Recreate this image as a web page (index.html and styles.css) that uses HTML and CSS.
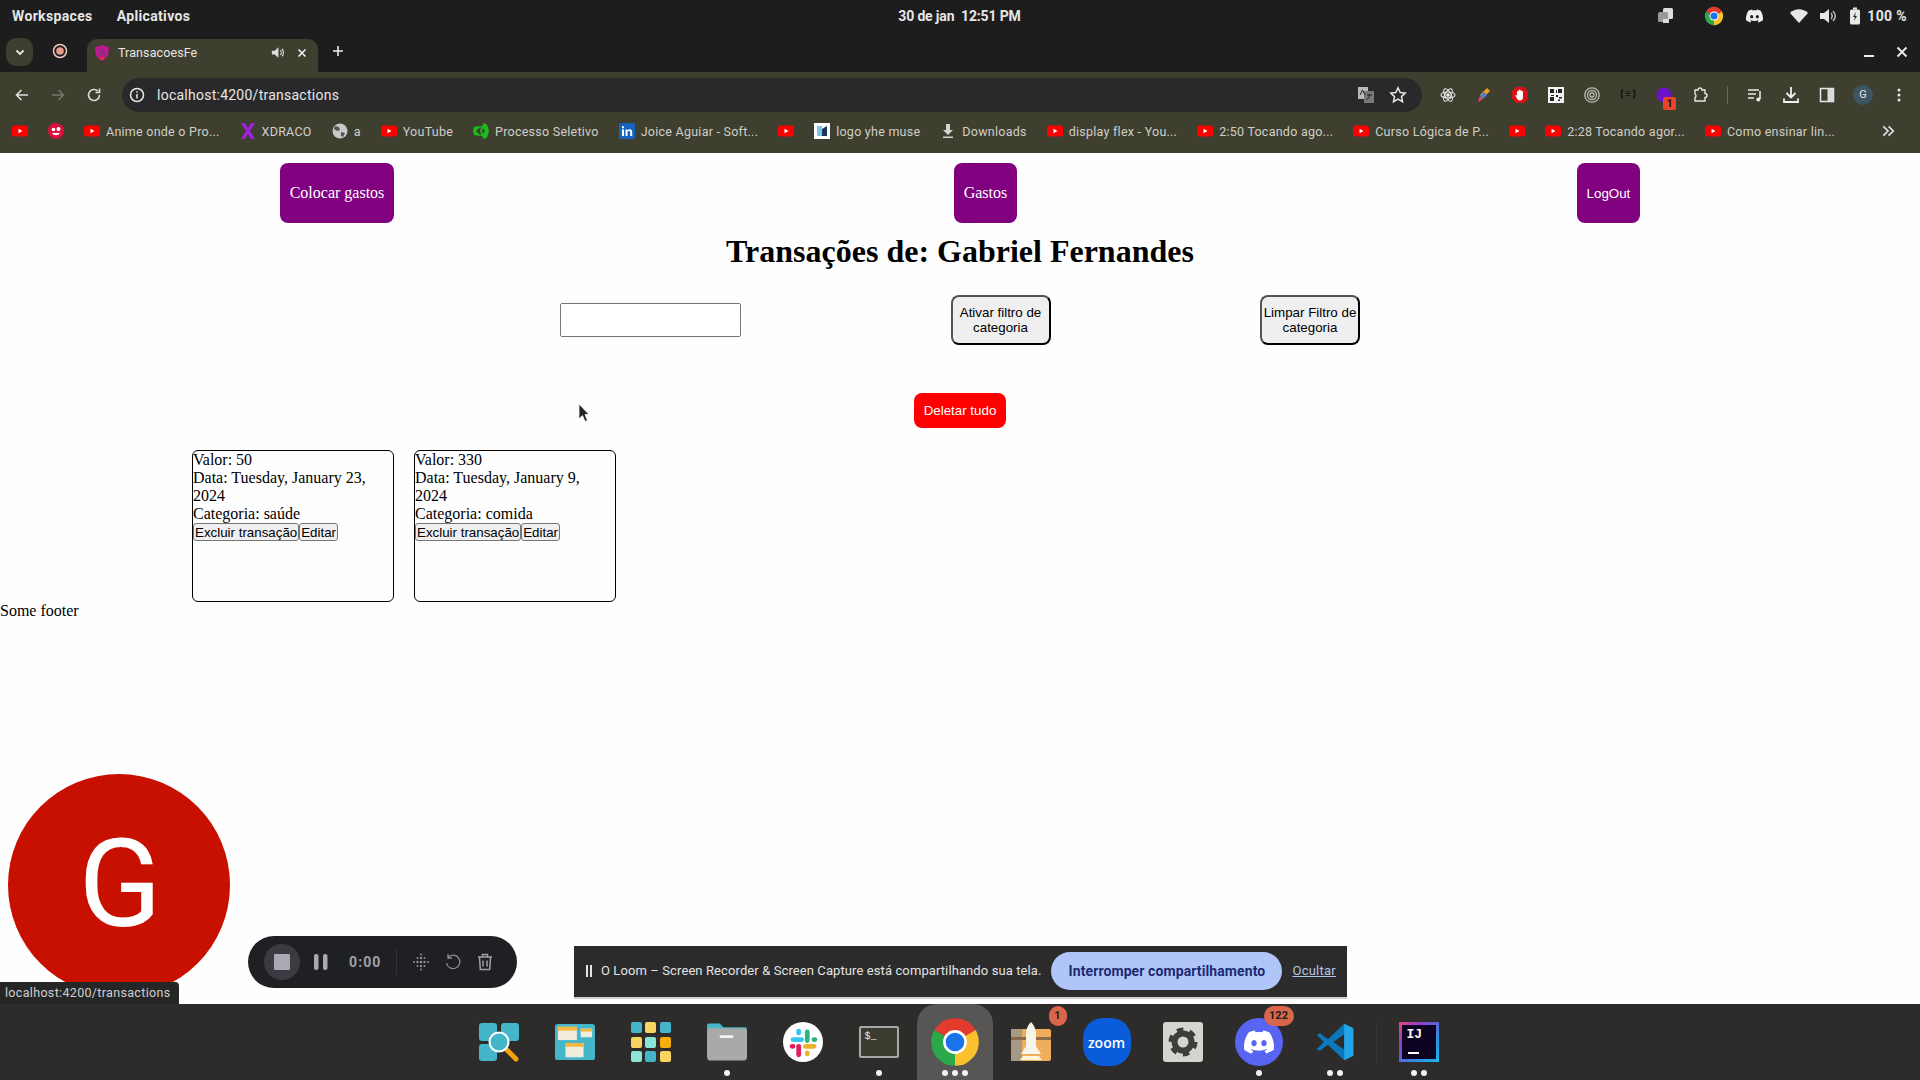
FILE: index.html
```html
<!DOCTYPE html>
<html lang="pt-BR">
<head>
<meta charset="utf-8">
<title>TransacoesFe</title>
<link rel="stylesheet" href="styles.css">
</head>
<body>
<svg class="defs" aria-hidden="true">
  <symbol id="yt" viewBox="0 0 16 16"><rect x="0" y="2.5" width="16" height="11" rx="2.5" fill="#f00"/><path d="M6.5 5.7v4.6L10.5 8z" fill="#fff"/></symbol>
  <symbol id="chrome" viewBox="0 0 48 48"><path d="M24 24L4.95 13A22 22 0 0 1 43.05 13Z" fill="#e33b2e"/><path d="M24 24L43.05 13A22 22 0 0 1 24 46Z" fill="#fbc02d"/><path d="M24 24L24 46A22 22 0 0 1 4.95 13Z" fill="#2aa84a"/><circle cx="24" cy="24" r="11" fill="#fff"/><circle cx="24" cy="24" r="8.6" fill="#1a73e8"/></symbol>
  <symbol id="discord" viewBox="0 0 24 24"><path d="M20.317 4.3698a19.7913 19.7913 0 00-4.8851-1.5152.0741.0741 0 00-.0785.0371c-.211.3753-.4447.8648-.6083 1.2495-1.8447-.2762-3.68-.2762-5.4868 0-.1636-.3933-.4058-.8742-.6177-1.2495a.077.077 0 00-.0785-.037 19.7363 19.7363 0 00-4.8852 1.515.0699.0699 0 00-.0321.0277C.5334 9.0458-.319 13.5799.0992 18.0578a.0824.0824 0 00.0312.0561c2.0528 1.5076 4.0413 2.4228 5.9929 3.0294a.0777.0777 0 00.0842-.0276c.4616-.6304.8731-1.2952 1.226-1.9942a.076.076 0 00-.0416-.1057c-.6528-.2476-1.2743-.5495-1.8722-.8923a.077.077 0 01-.0076-.1277c.1258-.0943.2517-.1923.3718-.2914a.0743.0743 0 01.0776-.0105c3.9278 1.7933 8.18 1.7933 12.0614 0a.0739.0739 0 01.0785.0095c.1202.099.246.1981.3728.2924a.077.077 0 01-.0066.1276 12.2986 12.2986 0 01-1.873.8914.0766.0766 0 00-.0407.1067c.3604.698.7719 1.3628 1.225 1.9932a.076.076 0 00.0842.0286c1.961-.6067 3.9495-1.5219 6.0023-3.0294a.077.077 0 00.0313-.0552c.5004-5.177-.8382-9.6739-3.5485-13.6604a.061.061 0 00-.0312-.0286zM8.02 15.3312c-1.1825 0-2.1569-1.0857-2.1569-2.419 0-1.3332.9555-2.4189 2.157-2.4189 1.2108 0 2.1757 1.0952 2.1568 2.419 0 1.3332-.9555 2.4189-2.1569 2.4189zm7.9748 0c-1.1825 0-2.1569-1.0857-2.1569-2.419 0-1.3332.9554-2.4189 2.1569-2.4189 1.2108 0 2.1757 1.0952 2.1568 2.419 0 1.3332-.946 2.4189-2.1568 2.4189Z"/></symbol>
</svg>

<div class="screen">
  <header class="panel">
    <div class="panel-left"><span>Workspaces</span><span>Aplicativos</span></div>
    <div class="panel-clock">30 de jan&nbsp;&nbsp;12:51 PM</div>
    <div class="panel-tray">
      <svg class="ico tray-first" viewBox="0 0 20 20"><rect x="8" y="2" width="10" height="11" rx="1.5" fill="#ddd"/><rect x="3" y="6" width="10" height="10" rx="1.5" fill="#999"/><rect x="8" y="13" width="6" height="4" fill="#ddd"/></svg>
      <svg class="ico" viewBox="0 0 20 20"><use href="#chrome"/></svg>
      <svg class="ico tray-app" viewBox="0 0 24 24" fill="#eee"><use href="#discord"/></svg>
      <svg class="ico tray-wifi" viewBox="0 0 20 20"><path d="M1 7c5-5 13-5 18 0l-9 10z" fill="#e8e8e8"/></svg>
      <svg class="ico tray-sm" viewBox="0 0 20 20"><path d="M3 7h4l5-4v14l-5-4H3z" fill="#e8e8e8"/><path d="M14 7c1.500 1.500 1.500 4.500 0 6M16 5c3 3 3 7 0 10" stroke="#bbb" stroke-width="1.500" fill="none"/></svg>
      <svg class="ico tray-bat" viewBox="0 0 20 20"><rect x="5" y="3.500" width="10" height="15" rx="1.500" fill="#e8e8e8"/><rect x="8" y="1.500" width="4" height="2" fill="#e8e8e8"/><path d="M11 6l-3 5h2l-1 4 3-5h-2z" fill="#222"/></svg>
      <span class="tray-pct">100 %</span>
    </div>
  </header>

  <div class="tabstrip">
    <button class="tab-menu" type="button"><svg viewBox="0 0 12 12" class="i12"><path d="M2.500 4.500L6 8l3.500-3.500" fill="none" stroke="#e8e8e8" stroke-width="1.800"/></svg></button>
    <svg class="rec" viewBox="0 0 16 16"><circle cx="8" cy="8" r="6.500" fill="none" stroke="#f2c6c0" stroke-width="1.500"/><circle cx="8" cy="8" r="3.800" fill="#e79d8e"/></svg>
    <div class="tab">
      <svg class="fav" viewBox="0 0 16 16"><path d="M8 0L1 2.500 2 11l6 5 6-5 1-8.500z" fill="#c2188f"/><path d="M8 3L4 12h1.800L8 7l2.200 5H12z" fill="#6d3b70"/><path d="M5 12h6l-1 3H6z" fill="#e8214f"/></svg>
      <span class="tab-title">TransacoesFe</span>
      <svg class="tab-sound" viewBox="0 0 16 16"><path d="M2 6h3l4-3.500v11L5 10H2z" fill="#ddd"/><path d="M11 5.500c1.300 1.300 1.300 3.700 0 5M12.800 4c2 2.200 2 5.800 0 8" stroke="#ddd" stroke-width="1.200" fill="none"/></svg>
      <svg class="tab-x" viewBox="0 0 12 12"><path d="M2.500 2.500l7 7m0-7l-7 7" stroke="#eee" stroke-width="1.600"/></svg>
    </div>
    <svg class="tab-plus" viewBox="0 0 12 12"><path d="M6 1v10M1 6h10" stroke="#eee" stroke-width="1.600"/></svg>
    <div class="win-ctrl">
      <svg class="i12" viewBox="0 0 12 12"><path d="M1 10h10" stroke="#eee" stroke-width="2"/></svg>
      <svg class="i12" viewBox="0 0 12 12"><path d="M1.500 1.500l9 9m0-9l-9 9" stroke="#eee" stroke-width="1.800"/></svg>
    </div>
  </div>

  <div class="toolbar">
    <div class="tool-group">
      <span class="tool"><svg class="i16" viewBox="0 0 16 16"><path d="M14 8H3M7.500 3L2.500 8l5 5" fill="none" stroke="#ddd" stroke-width="1.600"/></svg></span>
      <span class="tool"><svg class="i16" viewBox="0 0 16 16"><path d="M2 8h11M8.500 3l5 5-5 5" fill="none" stroke="#77776a" stroke-width="1.600"/></svg></span>
      <span class="tool"><svg class="i16" viewBox="0 0 16 16"><path d="M13.500 8a5.500 5.500 0 1 1-1.700-4M13.500 1.500V5.500H9.500" fill="none" stroke="#ddd" stroke-width="1.600"/></svg></span>
    </div>
    <div class="omnibox">
      <svg class="i16 omni-info" viewBox="0 0 16 16"><circle cx="8" cy="8" r="6.500" fill="none" stroke="#e8e8e8" stroke-width="1.500"/><path d="M8 7v4.500M8 4.300v1.500" stroke="#e8e8e8" stroke-width="1.500"/></svg>
      <span class="omni-url">localhost:4200/transactions</span>
      <svg class="i18 omni-tr" viewBox="0 0 18 18"><rect x="1" y="1" width="10" height="12" fill="#b9b9b9"/><rect x="7" y="5" width="10" height="12" fill="#777"/><path d="M3 9l2.500-5L8 9M10 9h5M12.500 8v1c0 2-1.500 4-3 5" stroke="#222" stroke-width="1" fill="none"/></svg>
      <svg class="i18 omni-star" viewBox="0 0 18 18"><path d="M9 1.800l2.200 4.700 5 .6-3.700 3.500 1 5.100L9 13.200l-4.500 2.500 1-5.100L1.800 7.100l5-.6z" fill="none" stroke="#e8e8e8" stroke-width="1.500"/></svg>
    </div>
    <div class="tool-group ext-group">
      <span class="tool"><svg class="i16" viewBox="0 0 16 16" fill="none" stroke="#e6e6e6" stroke-width="1.100"><ellipse cx="8" cy="8" rx="7" ry="3"/><ellipse cx="8" cy="8" rx="7" ry="3" transform="rotate(60 8 8)"/><ellipse cx="8" cy="8" rx="7" ry="3" transform="rotate(120 8 8)"/><circle cx="8" cy="8" r="1.300" fill="#e6e6e6"/></svg></span>
      <span class="tool"><svg class="i16" viewBox="0 0 16 16"><path d="M11 1l3 3-7 7-3-3z" fill="#f39c23"/><path d="M8 5l3 3-4 4-3-3z" fill="#4a7fd9"/><path d="M4 9l3 3-5 3z" fill="#e5484d"/></svg></span>
      <span class="tool"><svg class="i18" viewBox="0 0 18 18"><path d="M5.300 1h7.400L17 5.300v7.400L12.700 17H5.300L1 12.700V5.300z" fill="#e00f14"/><circle cx="9" cy="9" r="6.800" fill="#d91014"/><path d="M6 9V5.500a.8.800 0 0 1 1.500 0V4a.8.800 0 0 1 1.500 0v.500a.8.800 0 0 1 1.500 0V5.500a.8.800 0 0 1 1.500 0V11c0 2-1 3.500-3 3.500-1.800 0-2.500-1-3-2l-1.500-2.500c-.4-.8.6-1.400 1.200-.7z" fill="#fff"/></svg></span>
      <span class="tool"><svg class="i16" viewBox="0 0 16 16"><rect width="16" height="16" fill="#f2f2f2"/><path d="M2 2h4v4H2zM10 2h4v4h-4zM2 10h4v4H2zM8 8h2v2H8zM11 10h3v1.500h-3zM10 12.500h2V14h-2zM8 3h1v3H8zM3 8h3v1H3z" fill="#222"/></svg></span>
      <span class="tool"><svg class="i16" viewBox="0 0 16 16" fill="none" stroke="#bdbdb3"><circle cx="8" cy="8" r="7.200" stroke-width="1.300"/><circle cx="8" cy="8" r="4.500" stroke-width="1.300"/><circle cx="8" cy="8" r="2" stroke-width="1.300"/></svg></span>
      <span class="tool"><span class="ext-code">(≡)</span></span>
      <span class="tool ext-badged"><svg class="i16" viewBox="0 0 16 16"><circle cx="8" cy="8" r="7.500" fill="#6a12c9"/></svg><span class="ext-badge">1</span></span>
      <span class="tool"><svg class="i16" viewBox="0 0 16 16"><path d="M3 3h3a2 2 0 0 1 4 0h3v3.500a2 2 0 0 1 0 4V14H3v-3.500a2 2 0 0 0 0-3.500z" fill="none" stroke="#e8e8e8" stroke-width="1.400"/></svg></span>
      <span class="tool-sep"></span>
      <span class="tool"><svg class="i16" viewBox="0 0 16 16"><path d="M1 3h11M1 7h8M1 11h6" stroke="#e8e8e8" stroke-width="1.600"/><path d="M13 4v8" stroke="#e8e8e8" stroke-width="1.600"/><circle cx="11.300" cy="12.500" r="2" fill="#e8e8e8"/></svg></span>
      <span class="tool"><svg class="i18" viewBox="0 0 18 18"><path d="M9 1v10M4.500 7L9 11.500 13.500 7M2 12.500V16h14v-3.500" fill="none" stroke="#f0f0f0" stroke-width="1.800"/></svg></span>
      <span class="tool"><svg class="i16" viewBox="0 0 16 16"><rect x="1.500" y="1.500" width="13" height="13" fill="none" stroke="#e8e8e8" stroke-width="1.500"/><rect x="8.500" y="1.500" width="6" height="13" fill="#d9d9d9"/></svg></span>
      <span class="tool"><span class="profile">G</span></span>
      <span class="tool"><svg class="i16" viewBox="0 0 16 16" fill="#e8e8e8"><circle cx="8" cy="3" r="1.500"/><circle cx="8" cy="8" r="1.500"/><circle cx="8" cy="13" r="1.500"/></svg></span>
    </div>
  </div>

  <nav class="bookmarks">
    <a class="bm"><svg class="bi"><use href="#yt"/></svg></a>
    <a class="bm"><svg class="bi" viewBox="0 0 16 16"><circle cx="8" cy="8" r="8" fill="#d8103c"/><circle cx="5.500" cy="6.500" r="1.800" fill="#fff"/><circle cx="10.500" cy="6" r="2" fill="#fff"/><path d="M4 10c2 3 6 3 8 0z" fill="#fff"/></svg></a>
    <a class="bm"><svg class="bi"><use href="#yt"/></svg><span>Anime onde o Pro...</span></a>
    <a class="bm"><svg class="bi" viewBox="0 0 16 16"><path d="M1 0h4l3 5 3-5h4l-5 8 5 8h-4l-3-5-3 5H1l5-8z" fill="#a01ee0"/></svg><span>XDRACO</span></a>
    <a class="bm"><svg class="bi" viewBox="0 0 16 16"><circle cx="8" cy="8" r="7.500" fill="#c9c9c9"/><path d="M3 3l4 1 1 3-3 1-3-2zM9 9l4 1-2 4-2-1z" fill="#56564a"/></svg><span>a</span></a>
    <a class="bm"><svg class="bi"><use href="#yt"/></svg><span>YouTube</span></a>
    <a class="bm"><svg class="bi" viewBox="0 0 16 16"><path d="M10.500 0l3.500 1.500L16 8l-2 6.500L10.500 16 9 12.800H5.500L1 12 0 8l1-4 4.500-.8H9zM6.500 4.500L3 8l3.500 3.500h2L7 8l1.500-3.500zM10 5l-1 3 1 3 2-3z" fill="#1bbd1e" fill-rule="evenodd"/></svg><span>Processo Seletivo</span></a>
    <a class="bm"><svg class="bi" viewBox="0 0 16 16"><rect width="16" height="16" rx="1.500" fill="#1565c0"/><path d="M3 6.500h2V13H3zM3 3.300h2v2H3zM6.500 6.500h2v1c.6-.8 1.300-1.200 2.300-1.200 1.700 0 2.400 1.100 2.400 3V13h-2V9.700c0-1-.3-1.600-1.200-1.600s-1.500.7-1.500 1.700V13h-2z" fill="#fff"/></svg><span>Joice Aguiar - Soft...</span></a>
    <a class="bm"><svg class="bi"><use href="#yt"/></svg></a>
    <a class="bm"><svg class="bi" viewBox="0 0 16 16"><rect width="16" height="16" fill="#fff"/><path d="M3 3h5v10H3z" fill="#7fc3e8"/><path d="M8 6l5-3v10H8z" fill="#19375c"/></svg><span>logo yhe muse</span></a>
    <a class="bm"><svg class="bi" viewBox="0 0 16 16"><path d="M6 1h4v6h3l-5 5-5-5h3zM3 13.500h10V15H3z" fill="#d2d2d2"/></svg><span>Downloads</span></a>
    <a class="bm"><svg class="bi"><use href="#yt"/></svg><span>display flex - You...</span></a>
    <a class="bm"><svg class="bi"><use href="#yt"/></svg><span>2:50 Tocando ago...</span></a>
    <a class="bm"><svg class="bi"><use href="#yt"/></svg><span>Curso Lógica de P...</span></a>
    <a class="bm"><svg class="bi"><use href="#yt"/></svg></a>
    <a class="bm"><svg class="bi"><use href="#yt"/></svg><span>2:28 Tocando agor...</span></a>
    <a class="bm"><svg class="bi"><use href="#yt"/></svg><span>Como ensinar lin...</span></a>
    <svg class="bm-more" viewBox="0 0 12 12"><path d="M2 2l4 4-4 4M6.500 2l4 4-4 4" fill="none" stroke="#ddd" stroke-width="1.500"/></svg>
  </nav>

  <main class="page">
    <div class="top-nav">
      <a class="nav-btn nav-serif">Colocar gastos</a>
      <a class="nav-btn nav-serif">Gastos</a>
      <button class="nav-btn nav-sans" type="button">LogOut</button>
    </div>
    <h1 class="title">Transações de: Gabriel Fernandes</h1>
    <div class="filters">
      <input class="filter-input" type="text" aria-label="Categoria">
      <button class="filter-btn" type="button">Ativar filtro de categoria</button>
      <button class="filter-btn" type="button">Limpar Filtro de categoria</button>
    </div>
    <div class="delete-row"><button class="delete-btn" type="button">Deletar tudo</button></div>
    <div class="cards">
      <article class="card">
        <div>Valor: 50</div>
        <div>Data: Tuesday, January 23, 2024</div>
        <div>Categoria: saúde</div>
        <div class="card-actions"><button class="mini" type="button">Excluir transação</button><button class="mini" type="button">Editar</button></div>
      </article>
      <article class="card">
        <div>Valor: 330</div>
        <div>Data: Tuesday, January 9, 2024</div>
        <div>Categoria: comida</div>
        <div class="card-actions"><button class="mini" type="button">Excluir transação</button><button class="mini" type="button">Editar</button></div>
      </article>
    </div>
    <footer class="foot">Some footer</footer>

    <svg class="cursor" viewBox="0 0 12 20"><path d="M1 1v15l3.500-3.500 2.500 6 2.500-1-2.500-6H11z" fill="#222" stroke="#fff" stroke-width=".8"/></svg>
    <div class="avatar">G</div>
    <div class="status">localhost:4200/transactions</div>

    <div class="loom">
      <span class="loom-stop"><span class="loom-square"></span></span>
      <svg class="loom-pause" viewBox="0 0 14 16"><rect x="0" y="0" width="4.500" height="16" rx="2" fill="#a9a9b0"/><rect x="9" y="0" width="4.500" height="16" rx="2" fill="#a9a9b0"/></svg>
      <span class="loom-time">0:00</span>
      <span class="loom-sep"></span>
      <svg class="loom-ico" viewBox="0 0 18 18" fill="#8d8d93"><circle cx="9" cy="1.500" r="1"/><circle cx="5.500" cy="5" r="1"/><circle cx="9" cy="5" r="1.200"/><circle cx="12.500" cy="5" r="1"/><circle cx="2" cy="9" r="1"/><circle cx="5.500" cy="9" r="1.200"/><circle cx="9" cy="9" r="1.300"/><circle cx="12.500" cy="9" r="1.200"/><circle cx="16" cy="9" r="1"/><circle cx="5.500" cy="13" r="1"/><circle cx="9" cy="13" r="1.200"/><circle cx="12.500" cy="13" r="1"/><circle cx="9" cy="16.500" r="1"/></svg>
      <svg class="loom-ico" viewBox="0 0 18 18"><path d="M4 4.500A6.700 6.700 0 1 1 2.500 10M4 1v4h4" fill="none" stroke="#8d8d93" stroke-width="1.300"/></svg>
      <svg class="loom-ico" viewBox="0 0 18 18"><path d="M2 4h14M6.500 4V1.500h5V4M3.500 4l.8 12.500h9.400L14.500 4M7 7.500v6M11 7.500v6" fill="none" stroke="#a0a0a6" stroke-width="1.500"/></svg>
    </div>

    <div class="sharebar">
      <svg class="share-pause" viewBox="0 0 8 16"><path d="M1 2h2v12H1zM5 2h2v12H5z" fill="#e4e4e4"/></svg>
      <span class="share-text">O Loom – Screen Recorder &amp; Screen Capture está compartilhando sua tela.</span>
      <button class="share-stop" type="button">Interromper compartilhamento</button>
      <a class="share-hide">Ocultar</a>
    </div>
  </main>

  <footer class="dock">
    <div class="dock-apps">
      <div class="app"><svg class="dk" viewBox="0 0 40 40"><rect x="0" y="1" width="18" height="18" rx="3" fill="#45b5c9"/><rect x="22" y="1" width="18" height="18" rx="3" fill="#45b5c9"/><rect x="0" y="22" width="18" height="17" rx="3" fill="#45b5c9"/><path d="M27 27l10 10" stroke="#f0a30a" stroke-width="5" stroke-linecap="round"/><circle cx="20" cy="20" r="9.500" fill="#43b7ca" stroke="#fff" stroke-width="2"/></svg></div>
      <div class="app"><svg class="dk" viewBox="0 0 42 40"><rect y="1" width="42" height="38" rx="3" fill="#45b5c9"/><rect x="3" y="4" width="20" height="14" fill="#f1ecdb"/><rect x="3" y="4" width="20" height="4" fill="#f3b63f"/><rect x="27" y="6" width="12" height="9" fill="#f1ecdb"/><rect x="27" y="6" width="12" height="3" fill="#f3b63f"/><rect x="11" y="21" width="19" height="15" fill="#f1ecdb"/><rect x="11" y="21" width="19" height="4" fill="#f3b63f"/></svg></div>
      <div class="app"><div class="app-grid"><i class="g-teal"></i><i class="g-yellow"></i><i class="g-teal"></i><i class="g-yellow"></i><i class="g-mint"></i><i class="g-orange"></i><i class="g-mint"></i><i class="g-teal"></i><i class="g-yellow"></i></div></div>
      <div class="app"><svg class="dk" viewBox="0 0 41 40"><path d="M0 3a2 2 0 0 1 2-2h11l4 4h22a2 2 0 0 1 2 2v8H0z" fill="#45b5c9"/><rect y="6" width="41" height="33" rx="4" fill="#a9a9a9"/><rect x="13" y="13" width="14" height="3" rx="1" fill="#f3f3f3"/></svg><i class="dots"><b></b></i></div>
      <div class="app"><svg class="dk" viewBox="0 0 42 42"><circle cx="21" cy="21" r="21" fill="#fff"/><rect x="8" y="16" width="14" height="5" rx="2.500" fill="#36c5f0"/><rect x="14" y="7" width="5" height="7" rx="2.500" fill="#36c5f0"/><rect x="23" y="8" width="5" height="14" rx="2.500" fill="#2eb67d"/><rect x="30" y="16" width="6" height="5" rx="2.500" fill="#2eb67d"/><rect x="14" y="23" width="5" height="14" rx="2.500" fill="#e01e5a"/><rect x="7" y="23" width="6" height="5" rx="2.500" fill="#e01e5a"/><rect x="21" y="23" width="14" height="5" rx="2.500" fill="#ecb22e"/><rect x="23" y="30" width="5" height="6" rx="2.500" fill="#ecb22e"/></svg></div>
      <div class="app"><div class="app-term">$_</div><i class="dots"><b></b></i></div>
      <div class="app app-active"><svg class="dk-chrome"><use href="#chrome"/></svg><i class="dots"><b></b><b></b><b></b></i></div>
      <div class="app"><svg class="dk" viewBox="0 0 40 40"><rect y="7" width="40" height="32" rx="2" fill="#f0ad5c"/><rect y="7" width="11" height="32" fill="#a69a86"/><rect y="15" width="40" height="3" fill="#8b6b4a"/><path d="M20 0c3 3 5 7 5 13v11l5 8H10l5-8V13c0-6 2-10 5-13z" fill="#f7f4ea"/><path d="M12 34h16l3 4H9z" fill="#fff6d8"/></svg><span class="badge">1</span></div>
      <div class="app"><div class="app-zoom">zoom</div></div>
      <div class="app"><svg class="dk" viewBox="0 0 40 40"><rect width="40" height="40" rx="3" fill="#d5d4cf"/><circle cx="20" cy="20" r="8.500" fill="none" stroke="#3f3d38" stroke-width="6"/><circle cx="20" cy="20" r="12.500" fill="none" stroke="#3f3d38" stroke-width="4" stroke-dasharray="6.500 6.590"/></svg></div>
      <div class="app"><span class="app-discord"><svg class="dis" viewBox="0 0 24 24" fill="#fff"><use href="#discord"/></svg></span><span class="badge badge-wide">122</span><i class="dots"><b></b></i></div>
      <div class="app"><svg class="dk" viewBox="0 0 24 24"><path d="M17.500 1L7.700 10.300 3 6.700 1 7.700 5.300 12 1 16.300 3 17.300 7.700 13.700 17.500 23 23 20.300V3.700zM17.500 7.300V16.700L11 12z" fill="#0a78bd" fill-rule="evenodd"/><path d="M17.500 1L23 3.700V20.300L17.500 23V16.700 7.300z" fill="#22a5e6"/></svg><i class="dots"><b></b><b></b></i></div>
    </div>
    <span class="dock-sep"></span>
    <div class="app">
      <div class="app-ij"><div class="ij-inner"><span>IJ</span><em></em></div></div>
      <i class="dots"><b></b><b></b></i>
    </div>
  </footer>
</div>
</body>
</html>
```

FILE: styles.css
```css
* { box-sizing: border-box; }
html, body { margin: 0; height: 100%; }
body { overflow: hidden; background: #fff; font-family: "Liberation Serif", serif; }
.defs { display: none; }
.screen { display: flex; flex-direction: column; width: 1920px; height: 1080px; }
svg { display: block; flex: none; }
.i12 { width: 12px; height: 12px; }
.i16 { width: 16px; height: 16px; }
.i18 { width: 18px; height: 18px; }

/* GNOME panel */
.panel { display: grid; grid-template-columns: 1fr auto 1fr; align-items: center; height: 32px; padding: 0 13px 0 12px; background: #1d1d1d; color: #e6e6e6; font: 700 14px Roboto, sans-serif; }
.panel-left { display: flex; gap: 24px; }
.panel-left span { letter-spacing: .35px; }
.panel-clock { font-size: 14px; font-weight: 700; letter-spacing: -.15px; white-space: pre; }
.panel-tray { display: flex; align-items: center; justify-content: flex-end; gap: 20px; }
.ico { width: 20px; height: 20px; }
.tray-first { margin-right: 9px; }
.tray-app { width: 17px; margin: 0 1.500px; }
.tray-wifi { margin-left: 5px; margin-right: -12px; }
.tray-sm { margin-right: -12px; }
.tray-bat { margin-right: -18px; }
.tray-pct { letter-spacing: .35px; }

/* Tab strip */
.tabstrip { display: flex; align-items: flex-end; height: 40px; background: #1d1d1d; }
.tab-menu { display: flex; align-items: center; justify-content: center; width: 27px; height: 28px; margin: 0 0 6px 6px; padding: 0; border: 0; border-radius: 10px; background: #3f3f30; }
.rec { width: 16px; height: 16px; margin: 0 19px 13px 19px; }
.tab { display: flex; align-items: center; width: 231px; height: 33px; margin-left: 0; padding: 0 10px 6px 7px; border-radius: 10px 10px 0 0; background: #3f3f30; color: #e6e6e6; font: 12.500px Roboto, sans-serif; }
.fav { width: 16px; height: 16px; }
.tab-title { flex: 1; margin-left: 8px; letter-spacing: .1px; }
.tab-sound { width: 15px; height: 15px; margin-right: 11px; }
.tab-x { width: 12px; height: 12px; }
.tab-plus { width: 12px; height: 12px; margin: 0 0 15px 14px; }
.win-ctrl { display: flex; gap: 21px; margin: 0 12px 14px auto; }

/* Toolbar */
.toolbar { display: flex; align-items: center; height: 41px; padding-top: 4px; background: #3f3f30; }
.tool-group { display: flex; align-items: center; padding-left: 4px; }
.tool { position: relative; display: flex; align-items: center; justify-content: center; width: 36px; height: 32px; }
.omnibox { display: flex; align-items: center; width: 1300px; height: 34px; margin-left: 10px; padding: 0 15px 0 7px; border-radius: 17px; background: #29292b; color: #e6e6e6; font: 14px Roboto, sans-serif; }
.omni-info { margin-right: 12px; }
.omni-url { flex: 1; letter-spacing: .25px; }
.omni-tr { margin-right: 14px; }
.ext-group { padding-left: 8px; }
.ext-code { color: #111; font: 700 10px "Liberation Mono", monospace; }
.ext-badge { position: absolute; right: 6px; bottom: 1px; width: 13px; height: 13px; border-radius: 2px; background: #e8452c; color: #111; font: 700 10px/13px Roboto, sans-serif; text-align: center; }
.tool-sep { width: 1px; height: 18px; margin: 0 9px; background: #6a6a5c; }
.profile { width: 20px; height: 20px; border-radius: 50%; background: #3c5560; color: #e6e6e6; font: 11px/20px Roboto, sans-serif; text-align: center; }

/* Bookmarks */
.bookmarks { display: flex; align-items: center; gap: 20px; height: 40px; padding: 0 0 4px 12px; background: #3f3f30; color: #cfcfc8; font: 12.500px Roboto, sans-serif; letter-spacing: .25px; white-space: nowrap; }
.bm { display: flex; align-items: center; gap: 6px; }
.bi { width: 16px; height: 16px; }
.bm-more { width: 14px; height: 14px; margin-left: auto; margin-right: 25px; }

/* Page */
.page { position: relative; flex: 1; min-height: 0; padding-top: 10px; background: #fefefe; color: #000; font: 16px/18px "Liberation Serif", serif; }
.top-nav { display: flex; align-items: stretch; justify-content: space-around; height: 60px; }
.nav-btn { display: flex; align-items: center; padding: 0 10px; border: 0; border-radius: 8px; background: #800080; color: #fff; }
.nav-serif { font: 16px "Liberation Serif", serif; }
.nav-sans { font: 13.330px "Liberation Sans", sans-serif; }
.title { margin: 10px 0 25px; font: 700 32px/37px "Liberation Serif", serif; text-align: center; }
.filters { display: flex; align-items: center; justify-content: space-between; width: 800px; height: 50px; margin: 0 auto; }
.filter-input { width: 181px; height: 34px; padding: 1px 2px; border: 1px solid #767676; border-radius: 2px; background: #fff; }
.filter-btn { width: 100px; height: 50px; padding: 1px; border: 2px outset #000; border-radius: 8px; background: #efefef; color: #000; font: 13.330px/15px "Liberation Sans", sans-serif; }
.delete-row { display: flex; justify-content: center; margin-top: 48px; }
.delete-btn { width: 92px; height: 35px; padding: 0; border: 0; border-radius: 8px; background: #f00; color: #fff; font: 13.330px "Liberation Sans", sans-serif; }
.cards { display: flex; gap: 20px; margin-top: 22px; padding-left: 192px; }
.card { width: 202px; height: 152px; border: 1px solid #000; border-radius: 6px; }
.card-actions { display: flex; height: 18px; }
.mini { height: 18px; padding: 0 1px; border: 1px solid #767676; border-radius: 3px; background: #efefef; color: #000; font: 13.330px/15px "Liberation Sans", sans-serif; }
.foot { height: 18px; }

.cursor { position: absolute; left: 578px; top: 250px; width: 12px; height: 20px; }
.avatar { position: absolute; left: 8px; top: 621px; width: 222px; height: 222px; padding-left: 2px; border-radius: 50%; background: #c81000; color: #fff; font: 400 122px/222px Roboto, sans-serif; text-align: center; }
.status { position: absolute; left: 0; bottom: 0; width: 179px; height: 22px; padding-left: 5px; border-radius: 0 4px 0 0; background: #262626; color: #cfcfcf; font: 12.500px/22px Roboto, sans-serif; letter-spacing: .33px; white-space: nowrap; }

.loom { position: absolute; left: 248px; top: 783px; display: flex; align-items: center; width: 269px; height: 52px; padding-left: 16px; border-radius: 26px; background: #1f2023; }
.loom-stop { display: flex; align-items: center; justify-content: center; width: 36px; height: 36px; border-radius: 50%; background: #3b3b42; }
.loom-square { width: 16px; height: 16px; border-radius: 1px; background: #a9a9b4; }
.loom-pause { width: 14px; height: 16px; margin-left: 14px; }
.loom-time { margin-left: 21px; color: #a0a0a6; font: 700 14px Roboto, sans-serif; letter-spacing: 1.100px; }
.loom-sep { width: 1px; height: 26px; margin-left: 15px; background: #333; }
.loom-ico { width: 18px; height: 18px; margin-left: 14px; }
.loom-sep + .loom-ico { margin-left: 15px; }

.sharebar { position: absolute; left: 574px; top: 793px; display: flex; align-items: center; width: 773px; height: 51px; padding: 0 11px 2px 11px; background: #2b2b2b; box-shadow: 0 2px 0 #cfcfcf; color: #e3e3e3; font: 13px Roboto, sans-serif; }
.share-pause { width: 8px; height: 16px; }
.share-text { margin-left: 8px; white-space: nowrap; letter-spacing: .1px; }
.share-stop { width: 231px; height: 38px; margin-left: auto; padding: 0; border: 0; border-radius: 19px; background: #b0c6f8; color: #1d2a72; font: 700 14px Roboto, sans-serif; letter-spacing: .1px; }
.share-hide { margin-left: 10px; color: #b5c4e6; text-decoration: underline; letter-spacing: .25px; }

/* Dock */
.dock { display: flex; align-items: stretch; justify-content: center; height: 76px; padding-right: 3px; background: #2e2c2b; }
.dock-apps { display: flex; }
.dock-sep { width: 1px; height: 40px; margin: 18px 4px 0 3px; background: #3a3836; }
.app { position: relative; display: flex; align-items: center; justify-content: center; width: 76px; height: 76px; }
.dk { width: 40px; height: 40px; }
.app-active { background: #575654; border-radius: 20px 20px 0 0; }
.dk-chrome { width: 52px; height: 52px; }
.dots { position: absolute; left: 0; right: 0; top: 66px; display: flex; justify-content: center; gap: 4px; }
.dots b { width: 6px; height: 6px; border-radius: 50%; background: #f2f2f2; }
.app-grid { display: grid; grid-template-columns: repeat(3, 11px); grid-auto-rows: 11px; gap: 3.500px; }
.app-grid i { border-radius: 2px; }
.g-teal { background: #45b5c9; }
.g-yellow { background: #f7d560; }
.g-mint { background: #8ce6d8; }
.g-orange { background: #f8ae0a; }
.app-term { width: 40px; height: 32px; padding: 2px 4px; border: 2px solid #a8a8a8; border-radius: 2px; background: #3b3b30; color: #eee; font: 10px/13px "Liberation Mono", monospace; }
.badge { position: absolute; left: 56px; top: 2px; width: 18px; height: 20px; border-radius: 10px; background: #d9654b; color: #1d1d1d; font: 700 11px/20px Roboto, sans-serif; text-align: center; }
.badge-wide { left: 43px; width: 30px; }
.app-zoom { display: flex; align-items: center; justify-content: center; width: 48px; height: 48px; border-radius: 20px; background: #0b5cdb; color: #fff; font: 600 14px "Open Sans", sans-serif; }
.app-discord { display: flex; align-items: center; justify-content: center; width: 48px; height: 48px; border-radius: 50%; background: #5865f2; }
.dis { width: 30px; height: 30px; }
.app-ij { width: 40px; height: 40px; padding: 3px; background: linear-gradient(135deg, #f0467b 0%, #8a3fd1 30%, #2a8fe0 70%, #1fb6ee 100%); }
.ij-inner { position: relative; width: 34px; height: 34px; padding: 2px 5px; background: #0b0320; color: #fff; font: 700 13px/16px "Liberation Mono", monospace; }
.ij-inner em { position: absolute; left: 6px; bottom: 5px; width: 11px; height: 2px; background: #fff; }
```
